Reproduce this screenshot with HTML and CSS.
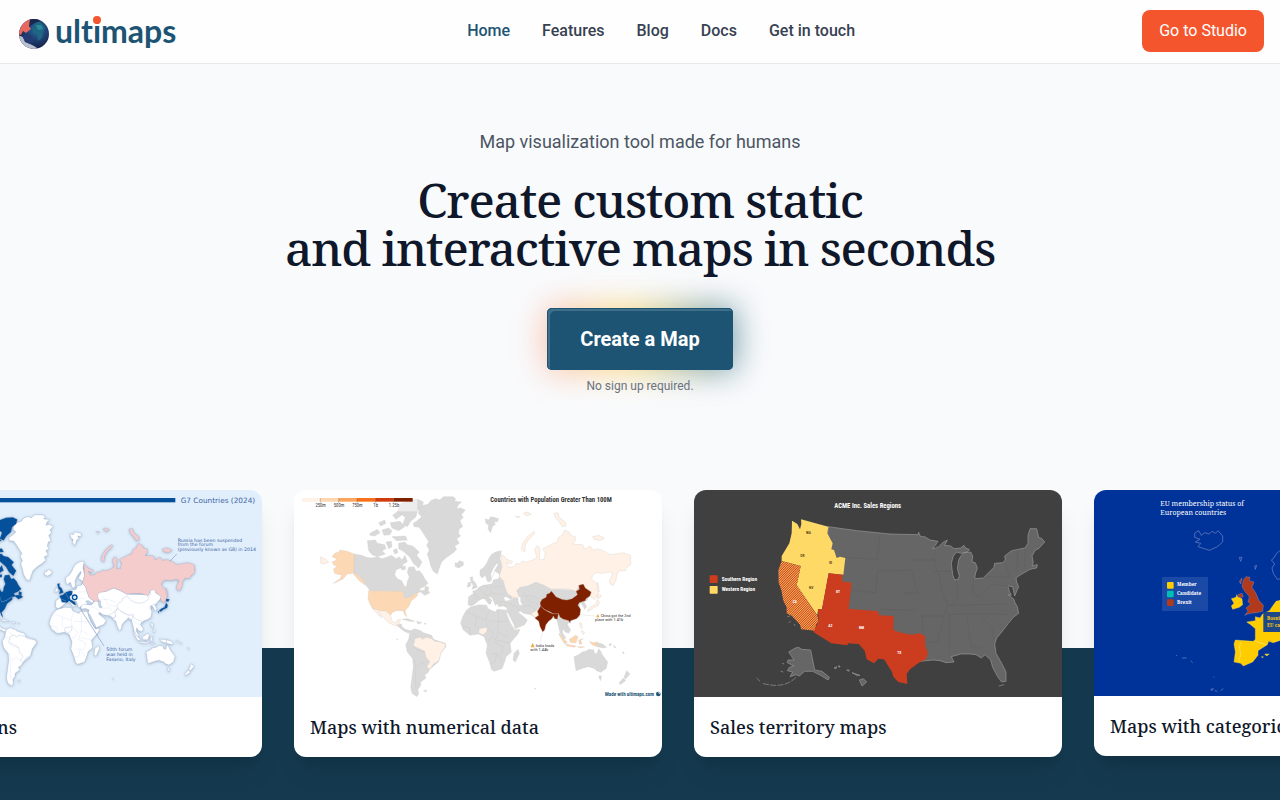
FILE: index.html
```html
<!DOCTYPE html>
<html lang="en">
<head>
  <meta charset="UTF-8">
  <meta name="viewport" content="width=device-width, initial-scale=1.0">
  <title>ultimaps</title>
  <link rel="stylesheet" href="styles.css">
</head>
<body>

<!-- world map shared by the cards, colours come from css variables -->
<svg class="defs" width="0" height="0" aria-hidden="true">
  <symbol id="world" viewBox="12 30 1104 621" overflow="visible">
    <g class="land">
      <path d="M372 140L370 130 382 122 395 110 385 100 388 86 394 78 415 72 422 62 436 56 450 60 460 50 490 50 498 58 492 64 515 66 505 74 500 86 512 84 526 90 514 104 520 112 510 122 518 140 508 146 505 160 512 168 500 176 508 190 494 198 500 208 490 218 470 232 455 245 448 264 442 282 430 274 422 258 418 240 412 222 418 210 410 196 416 185 400 160 388 142Z"/>
      <path d="M495 248L502 250 508 242 520 246 520 256 506 264 496 260Z"/>
      <path d="M585 116L596 120 602 110 612 112 626 116 622 126 612 124 616 134 608 138 602 158 594 148 596 136 588 130Z"/>
      <path d="M634 212L616 216 604 224 596 236 590 250 582 262 570 270 570 286 576 294 586 286 592 304 598 306 604 298 602 282 610 264 622 248 624 254 614 272 630 284 626 296 610 300 606 312 592 314 580 316 568 322 552 340 536 350 534 374 544 378 552 374 566 362 574 356 584 356 596 372 602 372 604 362 592 350 606 352 616 376 624 370 634 366 660 364 668 352 652 340 644 318 640 302 628 290 636 262 630 236Z"/>
      <path d="M534 308L542 306 542 318 532 322Z"/>
      <path d="M680 322L712 318 738 306 762 316 785 328 858 330 868 318 904 338 890 362 882 366 890 380 884 388 876 372 868 368 870 410 838 424 832 434 842 450 836 460 826 456 818 446 818 460 828 474 820 476 810 458 806 440 800 416 750 404 736 412 722 404 700 400 690 392 684 396 712 420 704 434 676 446 662 420 648 396 652 384 640 378 626 380 622 370 634 364 660 366 680 342Z"/>
      <path d="M540 382L568 374 590 376 594 386 616 396 622 388 646 390 650 404 660 428 674 450 690 448 684 462 660 490 664 516 648 530 645 542 636 566 612 574 604 568 600 550 588 520 592 495 582 470 566 462 540 466 520 450 512 430 518 410 528 392Z"/>
      <path d="M684 508L688 520 676 546 669 540 672 520Z"/>
      <path d="M852 530L866 524 876 516 888 514 896 508 912 510 912 518 920 522 926 506 932 514 938 526 953 546 948 566 932 577 920 572 914 566 896 560 880 564 858 572Z"/>
      <path d="M926 588L935 588 931 602ZM1010 572L1020 582 1006 598 1002 592ZM1000 594L1007 602 990 614 988 608Z"/>
      <path d="M922 488L938 492 950 502 940 504 922 500ZM956 494L964 490 962 498ZM970 496L978 502 974 504ZM998 514L1003 520 999 522Z"/>
      <path d="M318 434L334 432 336 440 346 448 362 452 356 460 340 452ZM336 418L352 416 374 424 360 424ZM380 424L396 428 384 432ZM402 430L408 430 406 434Z"/>
      <path d="M360 454L374 446 392 452 400 458 425 466 430 478 448 484 466 490 468 500 452 520 446 545 428 560 420 568 412 580 404 584 408 594 392 606 392 616 384 628 386 642 380 650 366 640 362 622 366 590 370 560 368 536 352 516 347 494 356 478Z"/>
      <path d="M400 632L410 630 408 636ZM320 476L324 478 322 480ZM734 624L738 626 735 628Z"/>
    </g>
    <g class="canada">
      <path d="M192 222L215 226 228 232 246 234 262 230 276 236 290 232 305 226 318 236 328 230 336 240 345 226 352 245 340 252 336 262 318 270 314 284 322 296 335 302 344 320 350 318 352 304 358 292 352 276 356 262 372 260 378 274 388 272 398 284 404 296 414 310 402 320 388 326 392 332 412 330 420 338 404 346 392 336 378 340 362 350 345 356 338 342 300 332 240 332 228 316 214 296 205 286 192 280Z"/>
      <path d="M232 182L256 180 262 190 284 194 288 206 276 212 286 222 262 230 246 224 236 212ZM240 160L262 148 270 158 254 168 240 166ZM266 128L284 120 288 130 272 138ZM276 150L296 144 306 152 300 164 282 166ZM288 186L304 184 306 200 296 206ZM308 106L326 92 336 104 318 118ZM300 128L330 124 344 140 326 152 306 144ZM322 94L334 70 360 60 384 58 400 66 396 82 382 92 378 110 362 124 352 140 338 134 346 112ZM306 170L346 168 352 180 320 182ZM326 190L344 186 352 194 368 198 388 216 380 226 396 246 386 264 370 250 360 232 340 214 326 206ZM310 210L320 206 324 218 314 222ZM332 262L346 258 346 268 336 270ZM406 318L416 322 414 332 404 330Z"/>
    </g>
    <g class="usa">
      <path d="M192 222L172 214 150 210 146 216 134 220 126 230 140 236 136 242 126 246 132 256 142 258 130 268 134 280 146 284 156 284 150 296 130 310 136 308 160 296 172 282 192 280 206 286 222 304 226 316 208 302 192 284Z"/>
      <path d="M236 332L338 334 345 356 362 350 383 337 382 348 364 362 356 380 345 392 350 410 344 404 340 392 320 392 306 398 302 406 288 394 270 392 248 386 240 372 234 356Z"/>
    </g>
    <g class="big">
      <path d="M248 386L270 392 288 394 302 406 306 424 318 428 322 420 332 418 326 432 316 438 296 428 280 412 268 396 264 394 276 414 268 408Z"/>
      <path d="M374 478L380 474 392 472 396 478 410 472 424 476 430 480 434 484 450 486 466 492 466 500 452 520 447 542 430 552 420 568 410 560 420 546 408 532 404 514 384 504 370 498Z"/>
      <path d="M568 446L592 442 590 456 578 464 566 458Z"/>
      <path d="M722 402L738 392 752 378 746 394 744 410 736 412Z"/>
      <path d="M868 428L876 432 876 446 870 440ZM874 452L884 456 880 464Z"/>
      <path d="M806 462L808 460 832 488 824 492Z" class="indo"/>
      <path d="M828 492L858 498 854 502 830 498ZM838 478L848 472 856 466 864 470 858 488 842 488ZM866 480L880 476 872 482 876 492 868 492ZM898 484L908 488 922 486 922 500 906 494ZM862 500L884 500 872 504Z" class="indo"/>
    </g>
    <g class="russia">
      <path d="M634 225L642 228 650 238 668 244 662 252 648 248 656 262 672 260 678 250 690 252 696 244 710 246 728 240 740 232 734 208 742 196 750 204 748 240 762 238 766 220 758 206 776 198 790 190 800 188 806 172 818 164 824 150 838 156 842 166 856 170 856 182 848 192 878 194 884 208 900 198 910 210 925 206 945 215 960 224 975 222 1000 218 1022 226 1022 254 1010 262 1006 272 988 272 980 284 978 300 970 316 960 312 958 302 968 280 958 276 940 280 918 278 908 286 905 296 922 314 926 340 914 358 904 352 902 338 890 326 878 314 866 318 858 334 835 326 805 326 785 328 762 316 738 306 712 318 690 322 680 332 690 356 668 352 652 340 644 318 640 302 628 290 636 262Z"/>
      <path d="M694 208L698 190 712 170 732 154 735 160 714 180 706 196 704 216ZM792 100L804 98 808 112 826 126 828 138 816 140 808 126 796 114ZM908 170L926 166 944 174 930 182 912 178ZM92 230L104 236 116 246 104 252 92 250ZM700 100L712 96 724 102 712 108ZM676 108L690 110 682 114ZM922 306L926 318 928 336 922 330Z"/>
    </g>
    <g class="japan"><path d="M896 386L906 378 916 374 922 358 928 366 926 376 910 384 904 390ZM922 344L934 346 930 354 922 354ZM892 388L898 390 896 396Z"/></g>
    <g class="west">
      <path d="M540 292L548 290 548 300 556 308 562 322 546 328 550 316 544 308ZM548 334L560 330 568 322 584 316 594 318 592 330 584 336 586 346 602 356 606 364 600 366 582 352 574 358 556 356 552 344Z"/>
    </g>
    <g class="top">
      <path d="M750 368L756 358 768 352 770 342 778 340 784 333 790 340 798 350 816 358 830 360 846 356 862 344 858 334 868 328 866 316 880 312 886 324 904 336 900 348 888 356 886 362 868 368 864 376 872 388 870 404 860 416 842 422 840 430 836 422 820 418 810 412 806 402 790 402 780 396 766 390 752 380Z"/>
      <path d="M752 378L762 388 780 398 792 402 806 400 802 418 794 416 790 408 786 416 776 424 768 434 764 450 758 456 750 440 746 424 734 414 746 406 742 394Z"/>
    </g>
    <path class="water" d="M684 348L692 352 692 364 698 376 688 376 684 362ZM640 352L650 350 664 360 646 364ZM648 396L654 398 674 438 672 446 660 426Z"/>
    <path class="borders" d="M530 396L560 410 556 438M560 410L588 420 598 390M588 420L592 442M624 392L626 424 660 424M598 424L626 424 624 456 650 470M592 442L612 462 600 480 592 480M540 466L540 444 516 438M556 438L566 446M610 484L640 500 632 524M604 520L624 522 636 546M624 456L616 480 640 484 662 490M600 550L616 546 620 520M552 344L570 352M568 322L580 344M600 312L606 340M606 340L640 344M586 346L604 340M610 322L640 318M600 306L616 270M660 372L680 380 690 396M700 336L720 366 746 372M700 378L722 376 736 390M694 348L716 346 748 356M356 478L376 486M370 500L384 512 404 516M372 536L378 560 376 590 378 626M380 560L396 548 410 560M368 458L384 472M806 418L820 434M826 430L832 446"/>
  </symbol>
</svg>

<header class="header">
  <a class="logo" href="#" aria-label="ultimaps">
    <svg width="164" height="48" viewBox="16 7 164 48">
      <defs>
        <radialGradient id="globe" cx="0.6" cy="0.35" r="0.7">
          <stop offset="0" stop-color="#256da0"/>
          <stop offset="0.5" stop-color="#1d3f70"/>
          <stop offset="1" stop-color="#131b3c"/>
        </radialGradient>
        <clipPath id="globe-clip"><circle cx="34" cy="34" r="15"/></clipPath>
      </defs>
      <circle cx="34" cy="34" r="15" fill="url(#globe)"/>
      <g clip-path="url(#globe-clip)">
        <path d="M18 34L22 24 30 18 33 21 29 26 31 29 26 33 23 31 21 35Z" fill="#e8675f"/>
        <path d="M18 35L23 37 25 42 30 44 34 46 40 50 24 50Z" fill="#b9bfd0"/>
        <path d="M26 33L32 36 34 42 30 44 25 41 22 36Z" fill="#243b72"/>
        <path d="M33 22L40 22 45 27 43 32 42 38 38 41 37 35 33 32 32 28 35 26Z" fill="#1f6683"/>
        <path d="M36 25L41 25 43 29 38 30Z" fill="#2a8a9c"/>
        <path d="M30 18L36 18 40 21 33 24 29 27Z" fill="#18284e"/>
      </g>
      <text class="logo-text" x="55" y="43">ultimaps</text>
      <circle cx="97" cy="20" r="4" fill="#f5552d"/>
    </svg>
  </a>
  <nav class="nav">
    <a class="active" href="#">Home</a>
    <a href="#">Features</a>
    <a href="#">Blog</a>
    <a href="#">Docs</a>
    <a href="#">Get in touch</a>
  </nav>
  <a class="studio" href="#">Go to Studio</a>
</header>

<main>
  <section class="hero">
    <p class="tagline">Map visualization tool made for humans</p>
    <h1>Create custom static<br>and interactive maps in seconds</h1>
    <button class="create" type="button"><span>Create a Map</span></button>
    <p class="note">No sign up required.</p>
  </section>

  <section class="cards">
    <article class="card">
      <svg class="g7" viewBox="-318 30 1104 621">
        <rect x="-318" y="30" width="1104" height="621" fill="#e1effc"/>
        <rect x="-290" y="54" width="816" height="13" fill="#04509b"/>
        <text x="542" y="69" font-size="22">G7 Countries (2024)</text>
        <g class="g7-map" transform="translate(-290 62) scale(.855)">
          <use href="#world" x="12" y="30" width="1104" height="621"/>
        </g>
        <path d="M240 385L312 498M510 244L530 222" stroke="#7f9cc4" stroke-width="2"/>
        <circle cx="224" cy="352" r="7" fill="#e1effc" stroke="#04509b" stroke-width="4"/>
        <g font-size="14">
          <text x="533" y="185">Russia has been suspended</text>
          <text x="533" y="198">from the forum</text>
          <text x="533" y="212">(previously known as G8) in 2014</text>
          <text x="319" y="514">50th forum</text>
          <text x="319" y="528">was held in</text>
          <text x="319" y="542">Fasano, Italy</text>
        </g>
      </svg>
      <h2>Annotations</h2>
    </article>

    <article class="card">
      <svg class="population" viewBox="12 30 1104 621">
        <rect x="12" y="30" width="1104" height="621" fill="#fff"/>
        <use href="#world" x="12" y="30" width="1104" height="621"/>
        <rect x="32" y="50" width="350" height="44" fill="#fff" opacity="0.5"/>
        <rect x="36" y="54" width="55" height="11" fill="#fff1e6"/>
        <rect x="91" y="54" width="55" height="11" fill="#fdd5ae"/>
        <rect x="146" y="54" width="55" height="11" fill="#fda55d"/>
        <rect x="201" y="54" width="55" height="11" fill="#f9701a"/>
        <rect x="256" y="54" width="55" height="11" fill="#cf3b0a"/>
        <rect x="311" y="54" width="57" height="11" fill="#7f2000"/>
        <path d="M91 54V70M146 54V70M201 54V70M256 54V70M311 54V70" stroke="#555"/>
        <g font-size="14" text-anchor="middle">
          <text x="92" y="82">250m</text>
          <text x="147" y="82">500m</text>
          <text x="202" y="82">750m</text>
          <text x="257" y="82">1b</text>
          <text x="312" y="82">1.25b</text>
        </g>
        <text x="601" y="66" font-size="20" font-weight="bold">Countries with Population Greater Than 100M</text>
        <path d="M872 404L914 408M758 458L750 486" stroke="#ccc"/>
        <path d="M924 402L928 412H918ZM728 488L734 502H722Z" fill="#e6b04e"/>
        <g font-size="13">
          <text x="932" y="411">China got the 2nd</text>
          <text x="915" y="424">place with 1.41b</text>
          <text x="737" y="501">India leads</text>
          <text x="721" y="514">with 1.44b</text>
        </g>
        <text class="made" x="945" y="648" font-size="15" font-weight="bold">Made with ultimaps.com</text>
        <circle cx="1105" cy="642" r="7" fill="#1d5473"/>
        <path d="M1104 636L1111 638 1108 643Z" fill="#fff"/>
      </svg>
      <h2>Maps with numerical data</h2>
    </article>

    <article class="card">
      <svg class="sales" viewBox="12 30 1104 621">
        <defs>
          <pattern id="stripes" width="5" height="5" patternUnits="userSpaceOnUse" patternTransform="rotate(45)">
            <rect width="5" height="5" fill="#cc3d20"/>
            <rect width="2" height="5" fill="#ffd966"/>
          </pattern>
        </defs>
        <rect x="12" y="30" width="1104" height="621" fill="#404040"/>
        <g fill="#666" stroke="#999" stroke-width="2" stroke-linejoin="round">
          <path d="M415 140L500 152 600 162 684 164 686 157 692 170 704 170 720 180 744 184 728 206 744 202 758 188 772 180 764 196 782 198 792 206 812 204 822 196 826 204 838 208 832 216 812 220 800 216 790 228 784 250 788 284 794 300 804 298 808 288 802 266 806 240 814 226 822 218 842 216 848 228 846 246 856 248 862 264 856 282 854 296 880 294 912 262 914 250 938 248 946 240 944 228 965 212 1005 204 1014 190 1014 166 1020 146 1040 146 1046 172 1056 176 1064 186 1046 206 1036 210 1026 228 1030 248 1026 258 1042 254 1040 264 1020 268 992 284 978 294 980 306 986 320 974 348 968 320 954 318 958 334 964 346 954 344 972 358 974 366 982 380 986 400 970 412 955 430 935 456 920 474 914 492 918 520 935 550 948 576 948 604 935 606 922 588 908 562 902 540 885 524 874 534 858 524 840 522 812 522 784 530 792 546 768 548 750 542 730 540 690 544 565 430 440 380 410 200Z"/>
          <path d="M316 504L326 502 335 508 362 510 374 570 396 574 418 592 414 600 392 586 368 574 344 574 328 588 318 584 300 590 308 576 292 572 298 562 312 558 292 548 294 540 312 540 296 516Z"/>
          <path d="M508 600L520 596 530 606 516 618ZM486 578L510 586 500 586ZM470 570L478 570 476 574ZM432 564L440 560 438 566ZM444 558L450 558 449 562Z"/>
          <path d="M318 592C294 616 262 622 216 610M210 604L200 594M276 550L282 552M272 574L280 576M926 618L942 614" fill="none" stroke-dasharray="18 4"/>
          <path d="M292 410L300 408M296 428L302 424M312 432L316 438" fill="none"/>
        </g>
        <path d="M570 162L562 238 466 232M562 274L664 270 684 340 642 340M562 274L556 338 484 330M566 388L680 390M696 408H760L744 486H708M696 408L700 460M668 240L740 240M730 274H784M742 190L730 240 746 280 756 340 774 376 762 406M800 300L804 350 790 372M852 294L846 340 868 350M880 294L896 290 960 292M868 350L910 312 960 320M774 376L950 372M772 404L870 400 952 404M776 408V520M830 404L842 500H874M870 404L908 446 912 480M945 250L960 290M984 206L980 276M1005 204L1004 260" fill="none" stroke="#5f5f5f" stroke-width="2"/>
        <path d="M333 118L415 140 412 160 428 190 424 208 432 210 440 234 450 230 466 234 460 284 416 280 396 388 384 388 382 406 320 316 332 258 275 243 275 228 298 190 305 160 306 122 322 132 330 148 334 132Z" fill="#ffd966"/>
        <path d="M275 243L332 258 320 316 382 406 386 424 378 434 376 452 334 448 330 434 306 408 290 400 290 382 280 362 274 330 266 308 265 270Z" fill="url(#stripes)"/>
        <path d="M416 280L458 284 456 304 485 308 476 386 565 394 566 406 611 408 610 450 626 456 640 460 666 464 688 460 705 468 706 498 714 518 708 538 690 546 660 568 650 582 652 612 625 606 610 590 606 576 582 538 565 536 552 550 530 538 524 512 506 492 474 490 472 496 424 490 370 456 386 424 384 388 396 388Z" fill="#cc3d20"/>
        <rect x="59" y="286" width="24" height="23" rx="2" fill="#cc3d20"/>
        <rect x="59" y="318" width="24" height="23" rx="2" fill="#ffd966"/>
        <g fill="#fff" font-weight="bold">
          <text x="433" y="83" font-size="20">ACME Inc. Sales Regions</text>
          <text x="95" y="302" font-size="16">Southern Region</text>
          <text x="95" y="334" font-size="16">Western Region</text>
          <g font-size="11">
            <text x="308" y="369">CA</text>
            <text x="438" y="340">UT</text>
            <text x="415" y="440">AZ</text>
            <text x="507" y="448">NM</text>
            <text x="622" y="522">TX</text>
          </g>
          <g font-size="11" fill="#5c4c1c">
            <text x="348" y="163">WA</text>
            <text x="331" y="231">OR</text>
            <text x="417" y="251">ID</text>
            <text x="357" y="326">NV</text>
          </g>
        </g>
      </svg>
      <h2>Sales territory maps</h2>
    </article>

    <article class="card">
      <svg class="eu" viewBox="42 30 1104 618">
        <rect x="42" y="30" width="1104" height="618" fill="#003399"/>
        <g fill="#fff">
          <text x="241" y="79" font-size="21">EU membership status of</text>
          <text x="241" y="105" font-size="21">European countries</text>
        </g>
        <g fill="none" stroke="#7288c4" stroke-width="2">
          <path d="M344 160L356 152 364 166 374 158 388 162 396 154 406 160 414 152 428 168 428 186 412 200 388 211 366 204 354 200 362 190 346 186 360 178 344 172Z"/>
          <path d="M478 232L486 232 482 244ZM524 258L530 256 526 268ZM392 628L400 626 396 632ZM404 632L412 634M422 632L430 626M288 526L291 527M306 534L320 534M332 542L338 548M400 590L403 592"/>
          <path d="M604 208L590 220 580 236 574 240 584 252 576 264 580 280 592 298 604 296"/>
        </g>
        <path d="M498 290L510 292 508 302 522 306 516 322 528 340 536 360 550 376 548 394 530 398 510 400 494 406 504 394 498 384 512 372 504 366 508 350 494 334 486 320 490 300ZM478 304L486 294 482 312ZM474 344L486 340 490 350 478 354Z" fill="#b13a1c" stroke="#9aa3cf"/>
        <g fill="#ffcc00" stroke="#ffe27a">
          <path d="M470 344L474 352 486 356 488 374 478 382 458 388 454 378 462 370 454 356 468 352Z"/>
          <path d="M604 360L588 364 578 378 568 392 548 402 540 414 526 410 526 422 500 426 512 434 526 446 526 478 520 484 466 480 462 492 466 516 462 546 482 550 490 558 518 546 534 526 534 512 562 494 566 484 580 488 604 480Z"/>
          <path d="M544 530L550 530 548 534ZM554 522L568 522 560 528Z"/>
        </g>
        <path d="M484 486L478 500 482 524 476 546M526 484L560 494" fill="none" stroke="#fff" stroke-width="1"/>
        <rect x="246" y="291" width="138" height="102" fill="#1a4aa6"/>
        <rect x="261" y="306" width="20" height="20" rx="3" fill="#ffcc00"/>
        <rect x="261" y="332" width="20" height="20" rx="3" fill="#00bfb3"/>
        <rect x="261" y="358" width="20" height="20" rx="3" fill="#b13a1c"/>
        <g fill="#fff" font-size="14" font-weight="bold">
          <text x="291" y="319">Member</text>
          <text x="291" y="345">Candidate</text>
          <text x="291" y="371">Brexit</text>
        </g>
        <rect x="550" y="396" width="180" height="60" fill="#1f4788"/>
        <g fill="#ffcc00" font-size="14" font-weight="bold">
          <text x="561" y="420">Bosnia</text>
          <text x="561" y="442">EU candidate</text>
        </g>
      </svg>
      <h2>Maps with categorical data</h2>
    </article>
  </section>
</main>

</body>
</html>
```
FILE: styles.css
```css
* {
  box-sizing: border-box;
}

body {
  margin: 0;
  min-height: 100vh;
  display: flex;
  flex-direction: column;
  font-family: Roboto, sans-serif;
  background-color: #f9fafc;
  color: #0f172a;
  overflow-x: hidden;
}

h1, h2, p {
  margin: 0;
}

a {
  color: inherit;
  text-decoration: none;
}

.defs {
  position: absolute;
}

/* header */
.header {
  display: flex;
  align-items: center;
  justify-content: space-between;
  height: 64px;
  padding: 0 16px 2px;
  background-color: #fefefe;
  border-bottom: 1px solid #e5e7eb;
}

.logo,
.logo svg {
  display: block;
}

.logo-text {
  font-family: Lato, sans-serif;
  font-size: 32px;
  font-weight: bold;
  font-variant-ligatures: none;
  fill: #1d5473;
}

.nav {
  display: flex;
  gap: 32px;
  font-weight: 500;
  color: #374151;
}

.nav .active {
  color: #1d5473;
}

.studio {
  padding: 0 17px;
  line-height: 42px;
  border-radius: 8px;
  background-color: #f5552d;
  color: #fff;
}

/* hero */
main {
  flex: 1;
  display: flex;
  flex-direction: column;
}

.hero {
  display: flex;
  flex-direction: column;
  align-items: center;
  padding: 64px 16px 96px;
  text-align: center;
}

.tagline {
  font-size: 18px;
  line-height: 28px;
  color: #4b5563;
}

h1 {
  margin: 20px 0 36px;
  font-family: "Noto Serif", "DejaVu Serif", serif;
  font-size: 48px;
  font-weight: 500;
  line-height: 48px;
  letter-spacing: -0.025em;
}

.create {
  position: relative;
  height: 62px;
  padding: 0;
  border: none;
  background: none;
  font: bold 20px Roboto, sans-serif;
  color: #fff;
  cursor: pointer;
}

.create::before {
  content: "";
  position: absolute;
  inset: -2px;
  border-radius: 8px;
  background: linear-gradient(90deg, #fba593, #fcd34d 45%, #1d6483);
  filter: blur(16px);
  opacity: 0.7;
}

.create span {
  position: relative;
  display: block;
  padding: 0 33px;
  line-height: 62px;
  border-radius: 5px;
  background-color: #1d5473;
  box-shadow: inset 0 0 0 1px #1d5473, inset 3px 3px 0 #3f6f89;
}

.note {
  position: relative;
  margin-top: 8px;
  font-size: 12px;
  line-height: 16px;
  color: #6b7280;
}

/* cards */
.cards {
  flex: 1;
  display: flex;
  justify-content: center;
  align-items: flex-start;
  gap: 32px;
  padding: 0 0 40px 76px;
  overflow: hidden;
  background: linear-gradient(#f9fafc 158px, #153a50 158px);
}

.card {
  flex: 0 0 368px;
  border-radius: 12px;
  background-color: #fff;
  box-shadow: 0 20px 25px -5px rgba(0, 0, 0, 0.1), 0 8px 10px -6px rgba(0, 0, 0, 0.1);
  overflow: hidden;
}

.card > svg {
  display: block;
  width: 100%;
}

.card h2 {
  padding: 16px;
  font-family: "Noto Serif", "DejaVu Serif", serif;
  font-size: 18px;
  font-weight: 500;
  line-height: 28px;
  white-space: nowrap;
}

/* maps */
.land { fill: var(--land); }
.canada { fill: var(--canada); }
.usa { fill: var(--usa); }
.big { fill: var(--big); }
.indo { fill: var(--indo); }
.russia { fill: var(--russia); }
.japan { fill: var(--japan); }
.west { fill: var(--west); }
.top { fill: var(--top); }
.water { fill: var(--water); }

.borders {
  fill: none;
  stroke: var(--line);
}

.g7 {
  --land: #fff;
  --canada: #04509b;
  --usa: #04509b;
  --big: #fff;
  --indo: #fff;
  --russia: #f4cccc;
  --japan: #04509b;
  --west: #04509b;
  --top: #fff;
  --water: #c3d4e4;
  --line: #c9d4f2;
  font-family: "DejaVu Sans", sans-serif;
  fill: #3d63a5;
}

.g7-map {
  stroke: #8fa6cc;
  filter: drop-shadow(0 2px 5px rgba(60, 80, 110, 0.4));
}

.population {
  --land: #d9d9d9;
  --canada: #d9d9d9;
  --usa: #fdd8b4;
  --big: #fff1e6;
  --indo: #fdd5ae;
  --russia: #fff1e6;
  --japan: #fff1e6;
  --west: #d9d9d9;
  --top: #7f2000;
  --water: #fff;
  --line: #c6c6c6;
  font-family: "Roboto Condensed", Roboto, sans-serif;
  fill: #333;
}

.population use {
  stroke: #d0cbc6;
}

.made {
  fill: #1d5473;
}

.sales {
  font-family: "Roboto Condensed", Roboto, sans-serif;
}

.eu {
  font-family: "Noto Serif", "DejaVu Serif", serif;
}
```
